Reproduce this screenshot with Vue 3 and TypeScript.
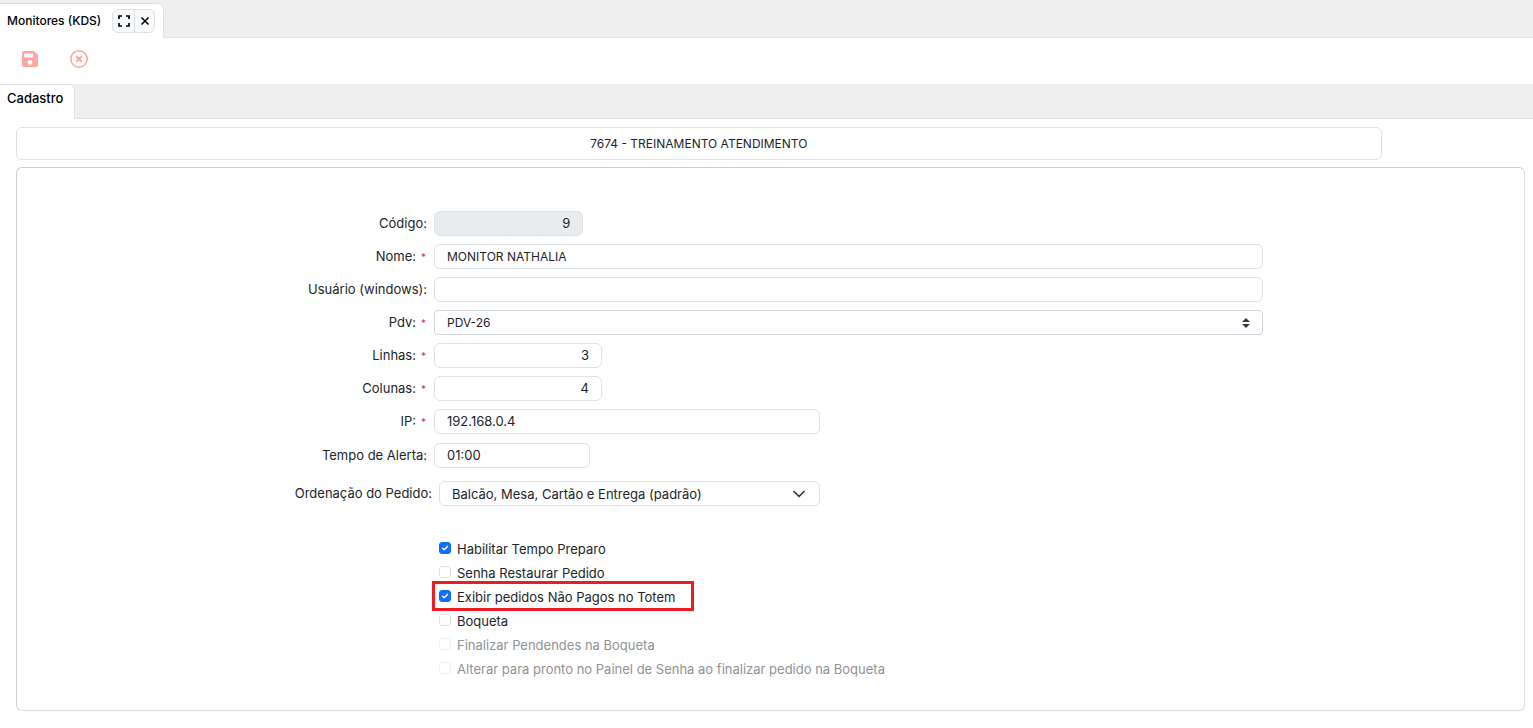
<script setup lang="ts">
import { ref } from 'vue'

interface Field {
  id: string
  label: string
  value: string
  size: 'code' | 'full' | 'number' | 'medium' | 'time'
  required?: boolean
  select?: boolean
  numeric?: boolean
  disabled?: boolean
}

interface Option {
  id: string
  label: string
  checked: boolean
  disabled?: boolean
  highlighted?: boolean
}

const fields = ref<Field[]>([
  { id: 'codigo', label: 'Código:', value: '9', size: 'code', numeric: true, disabled: true },
  { id: 'nome', label: 'Nome:', value: 'MONITOR NATHALIA', size: 'full', required: true },
  { id: 'usuario', label: 'Usuário (windows):', value: '', size: 'full' },
  { id: 'pdv', label: 'Pdv:', value: 'PDV-26', size: 'full', required: true, select: true },
  { id: 'linhas', label: 'Linhas:', value: '3', size: 'number', required: true, numeric: true },
  { id: 'colunas', label: 'Colunas:', value: '4', size: 'number', required: true, numeric: true },
  { id: 'ip', label: 'IP:', value: '192.168.0.4', size: 'medium', required: true },
  { id: 'tempo', label: 'Tempo de Alerta:', value: '01:00', size: 'time' },
])

const order = ref('Balcão, Mesa, Cartão e Entrega (padrão)')

const options = ref<Option[]>([
  { id: 'preparo', label: 'Habilitar Tempo Preparo', checked: true },
  { id: 'senha', label: 'Senha Restaurar Pedido', checked: false },
  { id: 'totem', label: 'Exibir pedidos Não Pagos no Totem', checked: true, highlighted: true },
  { id: 'boqueta', label: 'Boqueta', checked: false },
  { id: 'pendentes', label: 'Finalizar Pendendes na Boqueta', checked: false, disabled: true },
  { id: 'pronto', label: 'Alterar para pronto no Painel de Senha ao finalizar pedido na Boqueta', checked: false, disabled: true },
])
</script>

<template>
  <div class="page">
    <header class="tabbar">
      <div class="tab window-tab">
        <span class="window-title">Monitores (KDS)</span>
        <div class="window-actions">
          <button type="button" aria-label="Maximizar">
            <svg width="12" height="12" viewBox="0 0 12 12" fill="none" stroke="#000" stroke-width="1.7">
              <path d="M1 4V1H4M8 1H11V4M11 8V11H8M4 11H1V8" />
            </svg>
          </button>
          <button type="button" aria-label="Fechar">
            <svg width="10" height="10" viewBox="0 0 10 10" fill="none" stroke="#000" stroke-width="1.5">
              <path d="M1.5 1.5L8.5 8.5M8.5 1.5L1.5 8.5" />
            </svg>
          </button>
        </div>
      </div>
    </header>

    <div class="toolbar">
      <button type="button" aria-label="Salvar">
        <svg width="16" height="16" viewBox="0 0 16 16">
          <path fill="#ffa5a0" fill-rule="evenodd" d="M2 0H12L16 4V14Q16 16 14 16H2Q0 16 0 14V2Q0 0 2 0ZM3 2.5Q2.2 2.5 2.2 3.3V5.8Q2.2 6.5 3 6.5H10.4Q11.2 6.5 11.2 5.8V3.3Q11.2 2.5 10.4 2.5ZM8 9A2.4 2.4 0 1 0 8 13.8A2.4 2.4 0 1 0 8 9Z" />
        </svg>
      </button>
      <button type="button" aria-label="Cancelar">
        <svg width="18" height="18" viewBox="0 0 18 18" fill="none" stroke="#ffa5a0">
          <circle cx="9" cy="9" r="8.2" stroke-width="1.6" />
          <path d="M6.2 6.2L11.8 11.8M11.8 6.2L6.2 11.8" stroke-width="2" />
        </svg>
      </button>
    </div>

    <nav class="tabbar">
      <button type="button" class="tab section-tab">Cadastro</button>
    </nav>

    <main class="content">
      <div class="unit">7674 - TREINAMENTO ATENDIMENTO</div>

      <form class="panel" @submit.prevent>
        <div class="fields">
          <div v-for="field in fields" :key="field.id" class="row">
            <label :for="field.id">{{ field.label }}<span v-if="field.required" class="required">*</span></label>
            <div v-if="field.select" class="picker" :class="field.size">
              <select :id="field.id" v-model="field.value" class="control framed full">
                <option>{{ field.value }}</option>
              </select>
              <svg class="sorter" width="8" height="10" viewBox="0 0 8 10" fill="#343a40">
                <path d="M0 4L4 0L8 4ZM0 6H8L4 10Z" />
              </svg>
            </div>
            <input
              v-else
              :id="field.id"
              v-model="field.value"
              type="text"
              class="control"
              :class="[field.size, { numeric: field.numeric }]"
              :disabled="field.disabled"
            />
          </div>
        </div>

        <div class="row order-row">
          <label for="ordem">Ordenação do Pedido:</label>
          <div class="picker order">
            <select id="ordem" v-model="order" class="control">
              <option>Balcão, Mesa, Cartão e Entrega (padrão)</option>
            </select>
            <svg class="chevron" width="12" height="8" viewBox="0 0 12 8" fill="none" stroke="#343a40" stroke-width="1.7" stroke-linecap="round" stroke-linejoin="round">
              <path d="M1 1.5L6 6.5L11 1.5" />
            </svg>
          </div>
        </div>

        <div class="row options-row">
          <div class="options">
            <label
              v-for="option in options"
              :key="option.id"
              class="option"
              :class="{ muted: option.disabled, highlighted: option.highlighted }"
            >
              <span class="tick">
                <input :id="option.id" v-model="option.checked" type="checkbox" :disabled="option.disabled" />
                <svg v-if="option.checked" width="12" height="12" viewBox="0 0 12 12" fill="none" stroke="#fff" stroke-width="1.5" stroke-linecap="round" stroke-linejoin="round">
                  <path d="M3.5 6.2L5.2 7.8L8.5 4.4" />
                </svg>
              </span>
              <span>{{ option.label }}</span>
            </label>
          </div>
        </div>
      </form>
    </main>
  </div>
</template>

<style>
body {
  margin: 0;
  background: #fff;
}
</style>

<style scoped>
.page,
.page * {
  box-sizing: border-box;
}

.page {
  font-family: Inter, "Liberation Sans", sans-serif;
  font-size: 13px;
  line-height: 24px;
  color: #212529;
}

button,
input,
select {
  margin: 0;
  font: inherit;
  color: inherit;
}

.tabbar {
  display: flex;
  background: #efefef;
  box-shadow: inset 0 -1px #dee2e6;
}

.tab {
  display: flex;
  background: #fff;
  border: 1px solid #dee2e6;
  border-width: 1px 1px 0 0;
  border-radius: 0 6px 0 0;
  color: #000;
}

.window-tab {
  height: 35px;
  margin-top: 3px;
  padding: 5px 8px 0 7px;
  gap: 11px;
}

.window-title {
  font-size: 12px;
  font-weight: 500;
}

.window-actions {
  display: flex;
  height: 24px;
  border: 1px solid #dee2e6;
  border-radius: 6px;
  background: #f8f9fa;
  overflow: hidden;
}

.window-actions button {
  display: flex;
  align-items: center;
  justify-content: center;
  width: 21px;
  padding: 0;
  border: 0;
  background: none;
}

.window-actions button + button {
  width: 20px;
  border-left: 1px solid #dee2e6;
}

.toolbar {
  display: flex;
  align-items: center;
  gap: 30px;
  height: 46px;
  padding: 0 20px 4px;
}

.toolbar button {
  display: flex;
  align-items: center;
  justify-content: center;
  width: 19px;
  height: 20px;
  padding: 0;
  border: 0;
  background: none;
}

.section-tab {
  height: 35px;
  padding: 1px 11px 0 7px;
  font-weight: 500;
}

.content {
  display: flex;
  flex-direction: column;
  gap: 7px;
  padding: 8px 8px 17px 16px;
}

.unit {
  width: 90.5%;
  padding: 4px 0 3px;
  border: 1px solid #dee2e6;
  border-radius: 6px;
  font-size: 12px;
  text-align: center;
}

.panel {
  padding: 43px 0 29px;
  border: 1px solid #dcdcdc;
  border-top-color: #cfcfcf;
  border-left-color: #cfcfcf;
  border-radius: 6px;
}

.fields {
  display: grid;
  gap: 8px;
}

.row {
  display: grid;
  grid-template-columns: 410fr 829fr 254fr;
  column-gap: 7px;
}

.fields .row:last-child {
  margin-top: 1px;
}

.row > label {
  text-align: right;
}

.required {
  margin: 0 1px 0 5px;
  font-size: 10px;
  color: #dc3545;
}

.order-row {
  grid-template-columns: 415fr 824fr 254fr;
  margin-top: 13px;
}

.control {
  width: 100%;
  height: 25px;
  padding: 0 12px 1px;
  border: 1px solid #dee2e6;
  border-radius: 6px;
  background: #fff;
  outline: none;
  appearance: none;
}

.control:disabled {
  background: #e9ecef;
}

.framed {
  border-color: #ced4da;
  border-radius: 4px;
}

.numeric {
  text-align: right;
}

.full {
  font-size: 12px;
}

.code {
  width: 18%;
}

.number {
  width: 168px;
}

.medium {
  width: 386px;
}

.time {
  width: 156px;
}

.picker {
  position: relative;
}

.order {
  width: 381px;
}

.sorter,
.chevron {
  position: absolute;
  top: 8px;
  right: 13px;
  pointer-events: none;
}

.chevron {
  top: 9px;
  right: 15px;
}

.options-row {
  grid-template-columns: 415fr 824fr 254fr;
  margin-top: 31px;
}

.options {
  grid-column: 2;
}

.option {
  position: relative;
  display: flex;
  width: max-content;
  gap: 6px;
}

.muted {
  color: #909294;
}

.highlighted::after {
  content: "";
  position: absolute;
  inset: -4px -19px -2px -7px;
  border: 3px solid #ed1c24;
}

.tick {
  position: relative;
  display: flex;
  height: 12px;
  margin-top: 5px;
}

.tick input {
  width: 12px;
  height: 12px;
  border: 1px solid #dee2e6;
  border-radius: 3px;
  background: #fff;
  appearance: none;
}

.tick input:checked {
  border-color: #0d6efd;
  background: #0d6efd;
}

.tick input:disabled {
  opacity: 0.5;
}

.tick svg {
  position: absolute;
  inset: 0;
  pointer-events: none;
}
</style>
